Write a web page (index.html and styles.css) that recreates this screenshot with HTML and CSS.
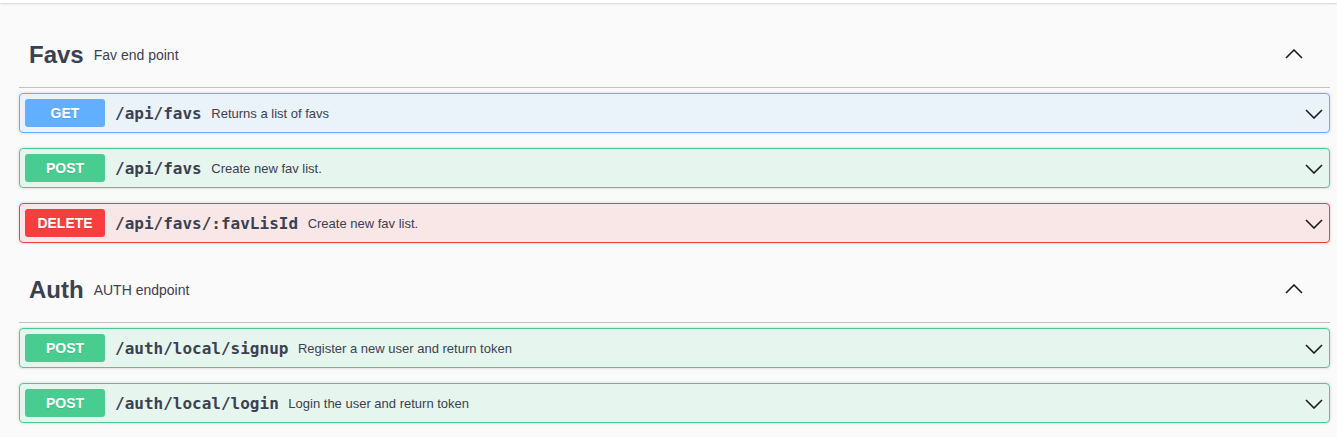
FILE: index.html
```html
<!DOCTYPE html>
<html>
<head>
<meta charset="utf-8">
<link rel="stylesheet" href="styles.css">
</head>
<body>
<div class="topbar"></div>
<div class="wrapper">
  <section class="tag-section">
    <div class="tag">
      <span class="tag-name">Favs</span>
      <span class="tag-desc">Fav end point</span>
      <svg class="tag-arrow" width="18" height="10" viewBox="0 0 18 10"><polyline points="1,9 9,1 17,9" fill="none" stroke="#1b1b1b" stroke-width="1.6"/></svg>
    </div>
    <div class="opblock get">
      <span class="method">GET</span>
      <span class="path">/api/favs</span>
      <span class="desc">Returns a list of favs</span>
      <svg class="op-arrow" width="18" height="10" viewBox="0 0 18 10"><polyline points="1,1 9,9 17,1" fill="none" stroke="#1b1b1b" stroke-width="1.6"/></svg>
    </div>
    <div class="opblock post">
      <span class="method">POST</span>
      <span class="path">/api/favs</span>
      <span class="desc">Create new fav list.</span>
      <svg class="op-arrow" width="18" height="10" viewBox="0 0 18 10"><polyline points="1,1 9,9 17,1" fill="none" stroke="#1b1b1b" stroke-width="1.6"/></svg>
    </div>
    <div class="opblock delete">
      <span class="method">DELETE</span>
      <span class="path">/api/favs/:favLisId</span>
      <span class="desc">Create new fav list.</span>
      <svg class="op-arrow" width="18" height="10" viewBox="0 0 18 10"><polyline points="1,1 9,9 17,1" fill="none" stroke="#1b1b1b" stroke-width="1.6"/></svg>
    </div>
  </section>
  <section class="tag-section">
    <div class="tag">
      <span class="tag-name">Auth</span>
      <span class="tag-desc">AUTH endpoint</span>
      <svg class="tag-arrow" width="18" height="10" viewBox="0 0 18 10"><polyline points="1,9 9,1 17,9" fill="none" stroke="#1b1b1b" stroke-width="1.6"/></svg>
    </div>
    <div class="opblock post">
      <span class="method">POST</span>
      <span class="path">/auth/local/signup</span>
      <span class="desc">Register a new user and return token</span>
      <svg class="op-arrow" width="18" height="10" viewBox="0 0 18 10"><polyline points="1,1 9,9 17,1" fill="none" stroke="#1b1b1b" stroke-width="1.6"/></svg>
    </div>
    <div class="opblock post">
      <span class="method">POST</span>
      <span class="path">/auth/local/login</span>
      <span class="desc">Login the user and return token</span>
      <svg class="op-arrow" width="18" height="10" viewBox="0 0 18 10"><polyline points="1,1 9,9 17,1" fill="none" stroke="#1b1b1b" stroke-width="1.6"/></svg>
    </div>
  </section>
</div>
</body>
</html>
```
FILE: styles.css
```css
html, body {
  margin: 0;
  padding: 0;
}
body {
  background: #fafafa;
  font-family: "Liberation Sans", Arial, sans-serif;
  color: #3b4151;
  overflow: hidden;
}
.topbar {
  height: 3px;
  background: #fff;
  box-shadow: 0 1px 2px 0 rgba(0, 0, 0, 0.15);
}
.wrapper {
  width: 1311px;
  padding: 20px 0 0 19px;
}
.tag {
  box-sizing: border-box;
  height: 65px;
  display: flex;
  align-items: center;
  padding: 0 0 0 10px;
  border-bottom: 1px solid rgba(59, 65, 81, 0.3);
  margin-bottom: 5px;
}
.tag-name {
  font-size: 24px;
  font-weight: bold;
  color: #3b4151;
}
.tag-desc {
  flex: 1;
  font-size: 14px;
  padding: 0 10px;
  color: #3b4151;
}
.tag-arrow {
  margin-right: 27px;
  margin-top: -2px;
}
.opblock {
  box-sizing: border-box;
  height: 40px;
  display: flex;
  align-items: center;
  padding: 0 6px 0 5px;
  border: 1px solid;
  border-radius: 4px;
  margin-bottom: 15px;
  box-shadow: 0 0 3px rgba(0, 0, 0, 0.19);
}
.opblock.get {
  border-color: #61affe;
  background: rgba(97, 175, 254, 0.1);
}
.opblock.post {
  border-color: #49cc90;
  background: rgba(73, 204, 144, 0.1);
}
.opblock.delete {
  border-color: #f93e3e;
  background: rgba(249, 62, 62, 0.1);
}
.method {
  width: 80px;
  height: 28px;
  line-height: 28px;
  text-align: center;
  font-size: 14px;
  font-weight: bold;
  color: #fff;
  border-radius: 3px;
  text-shadow: 0 1px 0 rgba(0, 0, 0, 0.1);
}
.get .method { background: #61affe; }
.post .method { background: #49cc90; }
.delete .method { background: #f93e3e; }
.path {
  font-family: "DejaVu Sans Mono", monospace;
  font-weight: bold;
  font-size: 16px;
  padding: 0 9.6px 0 10px;
  color: #3b4151;
}
.desc {
  flex: 1;
  font-size: 13px;
  color: #3b4151;
}
.op-arrow {
  margin-top: 1px;
}
```
